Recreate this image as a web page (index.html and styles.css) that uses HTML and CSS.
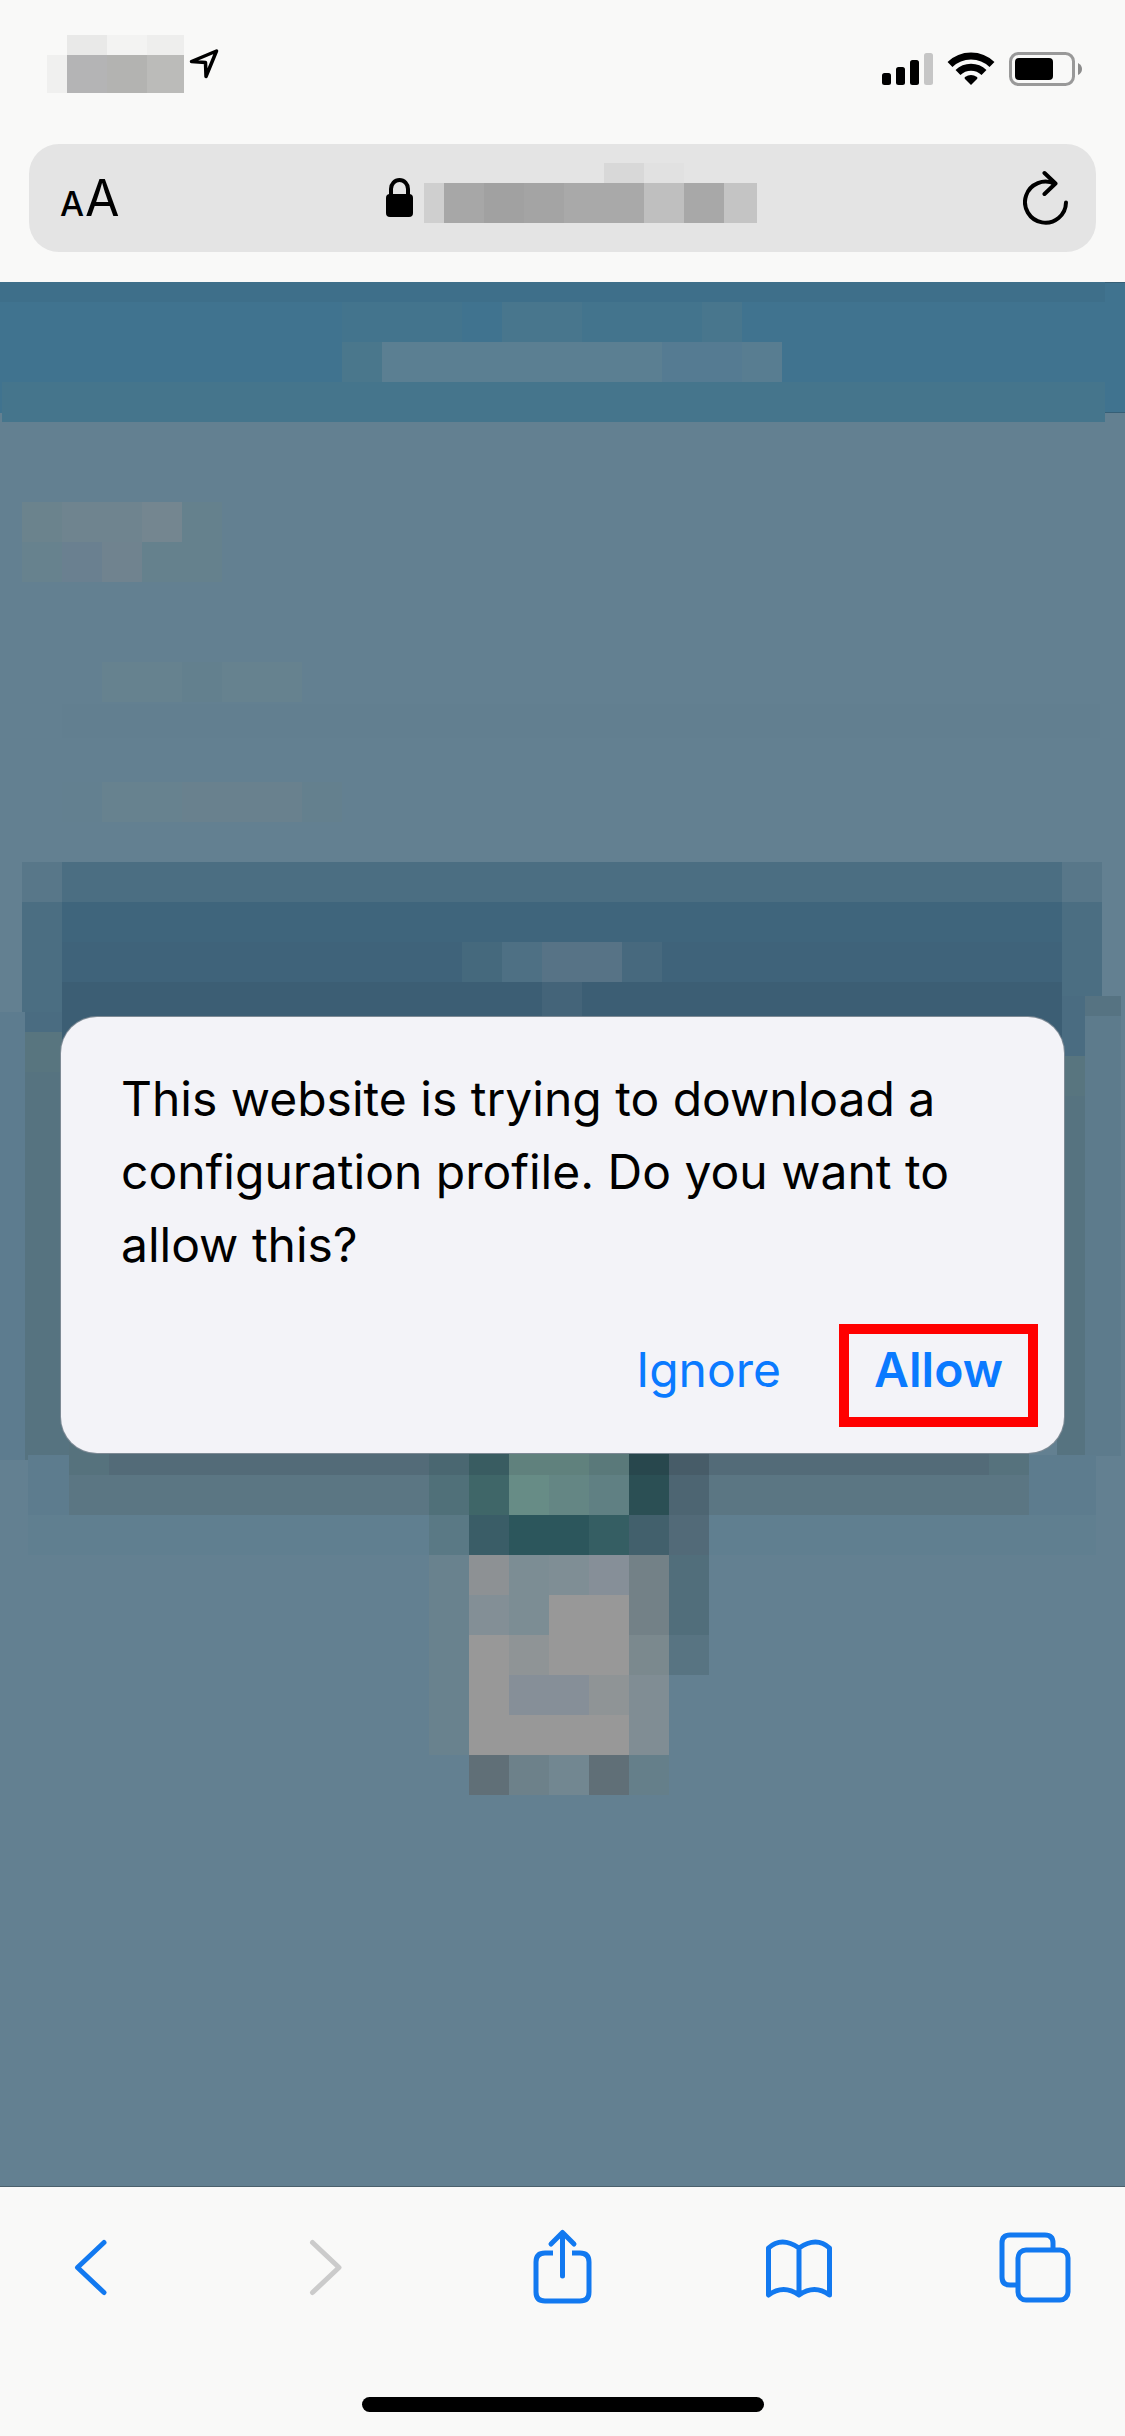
FILE: index.html
```html
<!DOCTYPE html>
<html lang="en">
<head>
<meta charset="utf-8">
<meta name="viewport" content="width=device-width">
<title>Configuration profile</title>
<link rel="stylesheet" href="styles.css">
</head>
<body>
<header class="browser-top">
  <div class="status-bar">
    <div class="status-left">
      <svg width="137" height="58" viewBox="47 35 137 58" shape-rendering="crispEdges" aria-hidden="true">
        <path fill="#e9e9e8" d="M67 35h40v20H67z"/><path fill="#f3f3f2" d="M107 35h40v20h-40z"/><path fill="#eeeeed" d="M147 35h37v20h-37z"/>
        <path fill="#f0f0ef" d="M47 55h20v38H47z"/><path fill="#b4b4b5" d="M67 55h40v38H67z"/><path fill="#b3b3b1" d="M107 55h40v38h-40z"/><path fill="#bbbbb9" d="M147 55h37v38h-37z"/>
      </svg>
      <svg width="30" height="30" viewBox="189 54 30 30" aria-hidden="true">
        <path d="M191.500 66.500 216.500 56 206 81.500 205.500 67.500Z" fill="none" stroke="#000" stroke-width="3.500" stroke-linejoin="round"/>
      </svg>
    </div>
    <svg width="200" height="36" viewBox="882 51 200 36" aria-hidden="true">
      <rect x="882" y="73" width="9" height="12" rx="2.500"/><rect x="896" y="67" width="9" height="18" rx="2.500"/><rect x="910" y="60" width="9" height="25" rx="2.500"/><rect x="924" y="53" width="9" height="32" rx="2.500" fill="#c6c6c6"/>
      <g fill="none" stroke="#000" stroke-width="7"><path d="M950 64.500a30 30 0 0 1 42 0"/><path d="M958 72.500a18.500 18.500 0 0 1 26 0"/></g>
      <path d="M971 85l-6-6q-1-1 0-2 6-4 12 0 1 1 0 2z"/>
      <rect x="1010.500" y="53.500" width="63" height="31" rx="8" fill="none" stroke="#999" stroke-width="3"/>
      <rect x="1015" y="58" width="38" height="22" rx="4"/><path fill="#8c8c8c" d="M1078 63q4 2 4 6t-4 6z"/>
    </svg>
  </div>
  <div class="address-bar">
    <button class="text-size" type="button" aria-label="Page settings"><span class="small-a">A</span><span class="large-a">A</span></button>
    <div class="address">
      <svg width="27" height="40" viewBox="387 178 27 40" aria-hidden="true"><path d="M392 196v-7a8.500 9 0 0 1 17 0v7" fill="none" stroke="#000" stroke-width="4"/><rect x="387" y="194" width="27" height="23" rx="4"/></svg>
      <svg width="333" height="70" viewBox="425 163 333 70" shape-rendering="crispEdges" aria-hidden="true">
        <path fill="#d8d8d8" d="M605 163h40v20h-40z"/><path fill="#e1e1e1" d="M645 163h40v20h-40z"/>
        <path fill="#cfcfcf" d="M425 183h20v40h-20z"/><path fill="#a7a7a7" d="M445 183h40v40h-40z"/><path fill="#a1a1a1" d="M485 183h40v40h-40z"/><path fill="#a4a4a4" d="M525 183h40v40h-40z"/><path fill="#a9a9a9" d="M565 183h80v40h-80z"/><path fill="#bfbfbf" d="M645 183h40v40h-40z"/><path fill="#a8a8a8" d="M685 183h40v40h-40z"/><path fill="#c4c4c4" d="M725 183h33v40h-33z"/>
      </svg>
    </div>
    <button class="reload" type="button" aria-label="Reload"><svg width="46" height="56" viewBox="1023 170 46 56" aria-hidden="true"><path d="M1055 184a20.500 20.500 0 1 0 11 18.500M1044.500 173l11 10.500-11 10.500" fill="none" stroke="#000" stroke-width="4" stroke-linecap="round" stroke-linejoin="round"/></svg></button>
  </div>
</header>
<main class="page">
  <svg class="backdrop" viewBox="0 282 1125 1904" shape-rendering="crispEdges" aria-hidden="true">
    <!-- site banner -->
    <path fill="#40738f" d="M0 282h1125v131H0z"/><path fill="#3e6f8a" d="M0 282h1105v20H0z"/><path fill="#365f76" d="M1105 282h20v1h-20zM1105 412h20v1h-20z"/>
    <path fill="#45758c" d="M2 382h1103v40H2z"/>
    <path fill="#43748d" d="M342 302h120v40H342zM582 302h120v40H582z"/><path fill="#48768d" d="M502 302h80v40h-80zM702 302h40v40h-40z"/>
    <path fill="#4a778c" d="M342 342h40v40h-40z"/><path fill="#5b7f92" d="M382 342h280v40H382z"/><path fill="#557b92" d="M662 342h80v40h-80z"/><path fill="#587d91" d="M742 342h40v40h-40z"/>
    <!-- headings -->
    <path fill="#6b838d" d="M22 502h40v40H22z"/><path fill="#6f848f" d="M62 502h80v40H62z"/><path fill="#748690" d="M142 502h40v40h-40z"/><path fill="#65818d" d="M182 502h40v80h-40zM142 542h40v40h-40z"/>
    <path fill="#67828e" d="M22 542h40v40H22z"/><path fill="#6a8090" d="M62 542h40v40H62z"/><path fill="#70838f" d="M102 542h40v40h-40z"/>
    <path fill="#66828f" d="M102 662h80v40h-80zM222 662h80v40h-80z"/><path fill="#63808e" d="M182 662h40v40h-40z"/><path fill="#627f90" d="M62 704h1038v34H62z"/>
    <path fill="#638090" d="M62 782h40v40H62z"/><path fill="#64808e" d="M302 782h40v40h-40z"/><path fill="#67828f" d="M102 782h80v40h-80z"/><path fill="#69818e" d="M182 782h120v40H182z"/>
    <!-- panel -->
    <path fill="#587789" d="M22 862h1080v40H22z"/><path fill="#4b6e82" d="M62 862h1000v40H62zM22 902h1080v110H22z"/>
    <path fill="#3f657c" d="M62 902h1000v40H62z"/><path fill="#3f637a" d="M62 942h1000v40H62z"/><path fill="#3c5e74" d="M62 982h1000v80H62z"/>
    <path fill="#45697d" d="M462 942h40v40h-40z"/><path fill="#4e7084" d="M502 942h40v40h-40z"/><path fill="#577386" d="M542 942h80v40h-80z"/><path fill="#47697e" d="M622 942h40v40h-40z"/><path fill="#446479" d="M542 982h40v34h-40z"/>
    <!-- dialog surround -->
    <path fill="#5d7c8f" d="M0 1012h25v448H0z"/><path fill="#4a6c81" d="M25 1012h37v20H25zM1062 996h23v60h-23z"/><path fill="#567382" d="M1085 996h36v20h-36z"/>
    <path fill="#5d7b8c" d="M1085 1016h36v440h-36z"/><path fill="#58757f" d="M25 1032h37v40H25zM1062 1056h23v40h-23z"/><path fill="#567380" d="M25 1072h44v388H25zM1057 1096h28v359h-28z"/>
    <path fill="#5d7c8e" d="M28 1455h1068v60H28z"/><path fill="#536b78" d="M109 1440h880v35H109z"/><path fill="#56727d" d="M69 1440h40v35H69zM989 1440h40v35h-40z"/><path fill="#5b7683" d="M69 1475h960v40H69z"/><path fill="#607f90" d="M28 1515h1068v40H28z"/>
    <!-- illustration -->
    <path fill="#4a6771" d="M429 1440h40v35h-40z"/><path fill="#507079" d="M429 1475h40v40h-40z"/><path fill="#5a7985" d="M429 1515h40v40h-40z"/><path fill="#69828e" d="M429 1555h40v200h-40z"/>
    <path fill="#395c61" d="M469 1440h40v35h-40z"/><path fill="#3f6668" d="M469 1475h40v40h-40z"/><path fill="#60817d" d="M509 1440h80v35h-80z"/><path fill="#5a797a" d="M589 1440h40v35h-40z"/><path fill="#678c86" d="M509 1475h40v40h-40z"/><path fill="#648684" d="M549 1475h40v40h-40z"/><path fill="#608083" d="M589 1475h40v40h-40z"/>
    <path fill="#28474d" d="M629 1440h40v35h-40z"/><path fill="#2b4f54" d="M629 1475h40v40h-40z"/><path fill="#475c68" d="M669 1440h40v35h-40z"/><path fill="#4d6572" d="M669 1475h40v40h-40z"/>
    <path fill="#3a5d67" d="M469 1515h40v40h-40z"/><path fill="#2c565c" d="M509 1515h80v40h-80z"/><path fill="#355e63" d="M589 1515h40v40h-40z"/><path fill="#42606c" d="M629 1515h40v40h-40z"/><path fill="#526a78" d="M669 1515h40v40h-40z"/>
    <path fill="#516e7b" d="M669 1555h40v80h-40z"/><path fill="#587482" d="M669 1635h40v40h-40z"/>
    <path fill="#989898" d="M469 1555h160v200H469z"/><path fill="#8d9194" d="M469 1555h40v40h-40z"/><path fill="#7c8d94" d="M509 1555h40v40h-40zM509 1595h40v40h-40z"/><path fill="#7f8e95" d="M549 1555h40v40h-40z"/><path fill="#838f96" d="M469 1595h40v40h-40z"/><path fill="#868f98" d="M589 1555h40v40h-40zM509 1675h80v40h-80z"/><path fill="#8f9496" d="M509 1635h40v40h-40zM589 1675h40v40h-40z"/>
    <path fill="#738187" d="M629 1555h40v80h-40z"/><path fill="#7b898e" d="M629 1635h40v40h-40z"/><path fill="#808d94" d="M629 1675h40v80h-40z"/>
    <path fill="#606f77" d="M469 1755h40v40h-40zM589 1755h40v40h-40z"/><path fill="#6d818a" d="M509 1755h40v40h-40z"/><path fill="#728791" d="M549 1755h40v40h-40z"/><path fill="#657f8a" d="M629 1755h40v40h-40z"/>
  </svg>
  <section class="dialog" role="alertdialog" aria-labelledby="dialog-message">
    <p class="message" id="dialog-message">This website is trying to download a configuration profile. Do you want to allow this?</p>
    <div class="actions">
      <button class="action" type="button">Ignore</button>
      <button class="action action-allow" type="button">Allow</button>
    </div>
  </section>
</main>
<footer class="browser-bottom">
  <nav class="toolbar" aria-label="Browser">
    <button class="tool" type="button" aria-label="Back"><svg viewBox="50 2226 80 80"><path d="M104 2242.500 77.500 2267.500 104 2292.500"/></svg></button>
    <button class="tool" type="button" aria-label="Forward" disabled><svg viewBox="287 2226 80 80"><path d="M313.500 2242.500 340 2267.500 313.500 2292.500"/></svg></button>
    <button class="tool" type="button" aria-label="Share"><svg viewBox="523 2225 80 80"><path class="butt" d="M553 2252h-8q-9 0-9 9v30q0 9 9 9h35q9 0 9-9v-30q0-9-9-9h-8"/><path d="M562.500 2275v-43M551 2243l11.500-11.500L574 2243"/></svg></button>
    <button class="tool" type="button" aria-label="Bookmarks"><svg viewBox="759 2226 80 80"><path d="M768.500 2295v-47q13-12 30.500 0 17.500-12 30.500 0v47q-15-11-30.500 0-15.500-11-30.500 0zM799 2248v46"/></svg></button>
    <button class="tool" type="button" aria-label="Tabs"><svg viewBox="995 2226 80 80"><path class="butt" d="M1017 2285h-7q-8 0-8-8v-34q0-8 8-8h35q8 0 8 8v7"/><rect x="1018" y="2250" width="50" height="50" rx="8"/></svg></button>
  </nav>
  <div class="home-indicator"></div>
</footer>
</body>
</html>
```
FILE: styles.css
```css
* { box-sizing: border-box; }

body {
  margin: 0;
  min-height: 100vh;
  display: flex;
  flex-direction: column;
  background: #f9f9f8;
  color: #000;
  font-family: Inter, "Liberation Sans", sans-serif;
}

svg { display: block; }

button {
  margin: 0;
  padding: 0;
  border: 0;
  background: none;
  color: inherit;
  font: inherit;
}

.browser-top { padding: 0 29px 30px; }

.status-bar {
  display: flex;
  justify-content: space-between;
  align-items: flex-start;
  height: 144px;
  padding: 35px 14px 0 18px;
}

.status-bar > svg { margin-top: 16px; }

.status-left {
  display: flex;
  align-items: center;
  gap: 5px;
}

.address-bar {
  display: flex;
  justify-content: space-between;
  align-items: center;
  height: 108px;
  padding: 0 27px 0 31px;
  border-radius: 30px;
  background: #e4e4e4;
}

.text-size {
  display: flex;
  align-items: baseline;
  gap: 1px;
  padding-top: 6px;
  line-height: 60px;
}

.small-a { font-size: 34px; font-weight: 500; }
.large-a { font-size: 50px; }

.address {
  display: flex;
  align-items: center;
  gap: 11px;
}

.page {
  flex: 1;
  display: grid;
  align-items: start;
  border-bottom: 1px solid #4b606c;
  background: #638091;
}

.backdrop {
  grid-area: 1 / 1;
  width: 100%;
}

.dialog {
  grid-area: 1 / 1;
  z-index: 1;
  align-self: start;
  margin: 735px 61px 0;
  padding: 45px 26px 26px 60px;
  border-radius: 36px;
  background: #f3f3f8;
  box-shadow: 0 0 0 1px #7d8a95;
}

.message {
  margin: 0 34px 0 0;
  font-size: 48px;
  line-height: 73px;
}

.actions {
  display: flex;
  justify-content: flex-end;
  gap: 48px;
  margin-top: 43px;
}

.action {
  height: 103px;
  padding-bottom: 11px;
  border: 10px solid transparent;
  color: #0a7aff;
  font-size: 48px;
  line-height: 60px;
}

.action-allow {
  width: 199px;
  border-color: #f00;
  font-weight: 600;
}

.browser-bottom {
  display: flex;
  flex-direction: column;
  align-items: center;
  padding: 39px 50px 24px;
}

.toolbar {
  display: flex;
  justify-content: space-between;
  width: 100%;
}

.tool {
  width: 80px;
  height: 80px;
  color: #1279f0;
}

.tool:disabled { color: #cbcbcb; }

.tool svg {
  fill: none;
  stroke: currentColor;
  stroke-width: 5px;
  stroke-linecap: round;
  stroke-linejoin: round;
}

.tool .butt { stroke-linecap: butt; }

.home-indicator {
  width: 402px;
  height: 15px;
  margin-top: 91px;
  border-radius: 8px;
  background: #000;
}
```
